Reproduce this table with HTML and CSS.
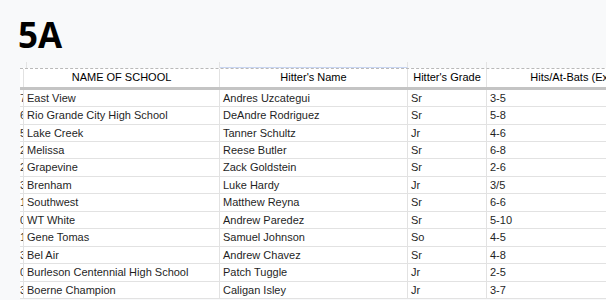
FILE: index.html
```html
<!DOCTYPE html>
<html>
<head>
<meta charset="utf-8">
<link rel="stylesheet" href="styles.css">
</head>
<body>
<h1 class="title">5A</h1>
<div class="sheet">
  <div class="row spacer">
    <div class="cell"></div><div class="cell"></div><div class="cell sel"></div><div class="cell"></div><div class="cell"></div>
  </div>
  <div class="row head">
    <div class="cell num"></div>
    <div class="cell c">NAME OF SCHOOL</div>
    <div class="cell c">Hitter's Name</div>
    <div class="cell c">Hitter's Grade</div>
    <div class="cell c">Hits/At-Bats (Extra Base Hits)</div>
  </div>
  <div class="row"><div class="cell num">7</div><div class="cell">East View</div><div class="cell">Andres Uzcategui</div><div class="cell">Sr</div><div class="cell">3-5</div></div>
  <div class="row"><div class="cell num">6</div><div class="cell">Rio Grande City High School</div><div class="cell">DeAndre Rodriguez</div><div class="cell">Sr</div><div class="cell">5-8</div></div>
  <div class="row"><div class="cell num">5</div><div class="cell">Lake Creek</div><div class="cell">Tanner Schultz</div><div class="cell">Jr</div><div class="cell">4-6</div></div>
  <div class="row"><div class="cell num">2</div><div class="cell">Melissa</div><div class="cell">Reese Butler</div><div class="cell">Sr</div><div class="cell">6-8</div></div>
  <div class="row"><div class="cell num">2</div><div class="cell">Grapevine</div><div class="cell">Zack Goldstein</div><div class="cell">Sr</div><div class="cell">2-6</div></div>
  <div class="row"><div class="cell num">3</div><div class="cell">Brenham</div><div class="cell">Luke Hardy</div><div class="cell">Jr</div><div class="cell">3/5</div></div>
  <div class="row"><div class="cell num">1</div><div class="cell">Southwest</div><div class="cell">Matthew Reyna</div><div class="cell">Sr</div><div class="cell">6-6</div></div>
  <div class="row"><div class="cell num">0</div><div class="cell">WT White</div><div class="cell">Andrew Paredez</div><div class="cell">Sr</div><div class="cell">5-10</div></div>
  <div class="row"><div class="cell num">1</div><div class="cell">Gene Tomas</div><div class="cell">Samuel Johnson</div><div class="cell">So</div><div class="cell">4-5</div></div>
  <div class="row"><div class="cell num">3</div><div class="cell">Bel Air</div><div class="cell">Andrew Chavez</div><div class="cell">Sr</div><div class="cell">4-8</div></div>
  <div class="row"><div class="cell num">0</div><div class="cell">Burleson Centennial High School</div><div class="cell">Patch Tuggle</div><div class="cell">Jr</div><div class="cell">2-5</div></div>
  <div class="row"><div class="cell num">3</div><div class="cell">Boerne Champion</div><div class="cell">Caligan Isley</div><div class="cell">Jr</div><div class="cell">3-7</div></div>
</div>
</body>
</html>
```

FILE: styles.css
```css
html, body {
  margin: 0;
  padding: 0;
  background: #f8f9fa;
  overflow: hidden;
}
body {
  width: 606px;
  height: 300px;
}
.title {
  margin: 17px 0 0 18px;
  font-family: "Open Sans", "Noto Sans", sans-serif;
  font-weight: 700;
  font-size: 35px;
  line-height: 35px;
  height: 35px;
  color: #000;
}
.sheet {
  margin: 10px 0 0 20px;
  width: 720px;
  background: #fff;
  font-family: "Liberation Sans", Arial, sans-serif;
  font-size: 11px;
  color: #1f1f1f;
}
.row {
  display: grid;
  grid-template-columns: 4px 196px 188px 79px 232px;
  height: 17.45px;
  box-sizing: border-box;
  border-bottom: 1px solid #e2e2e2;
  line-height: 16.45px;
}
.cell {
  box-sizing: border-box;
  border-right: 1px solid #e2e2e2;
  padding: 0 3px;
  white-space: nowrap;
  overflow: hidden;
}
.cell.num {
  padding: 0;
  direction: rtl;
  text-align: left;
  text-indent: -3px;
  color: #333;
}
.spacer {
  height: 6px;
  border-bottom: none;
  background: #f8f9fa;
}
.spacer .cell {
  border-right-color: #e4e4e4;
}
.spacer .cell.sel {
  border-bottom: 1px solid #c9d6f2;
}
.head {
  height: 21.7px;
  border-top: 1px dashed #b9b9b9;
  border-bottom: 3px solid #c4c4c4;
  line-height: 17.7px;
  color: #000;
}
.cell.c {
  text-align: center;
}
```
